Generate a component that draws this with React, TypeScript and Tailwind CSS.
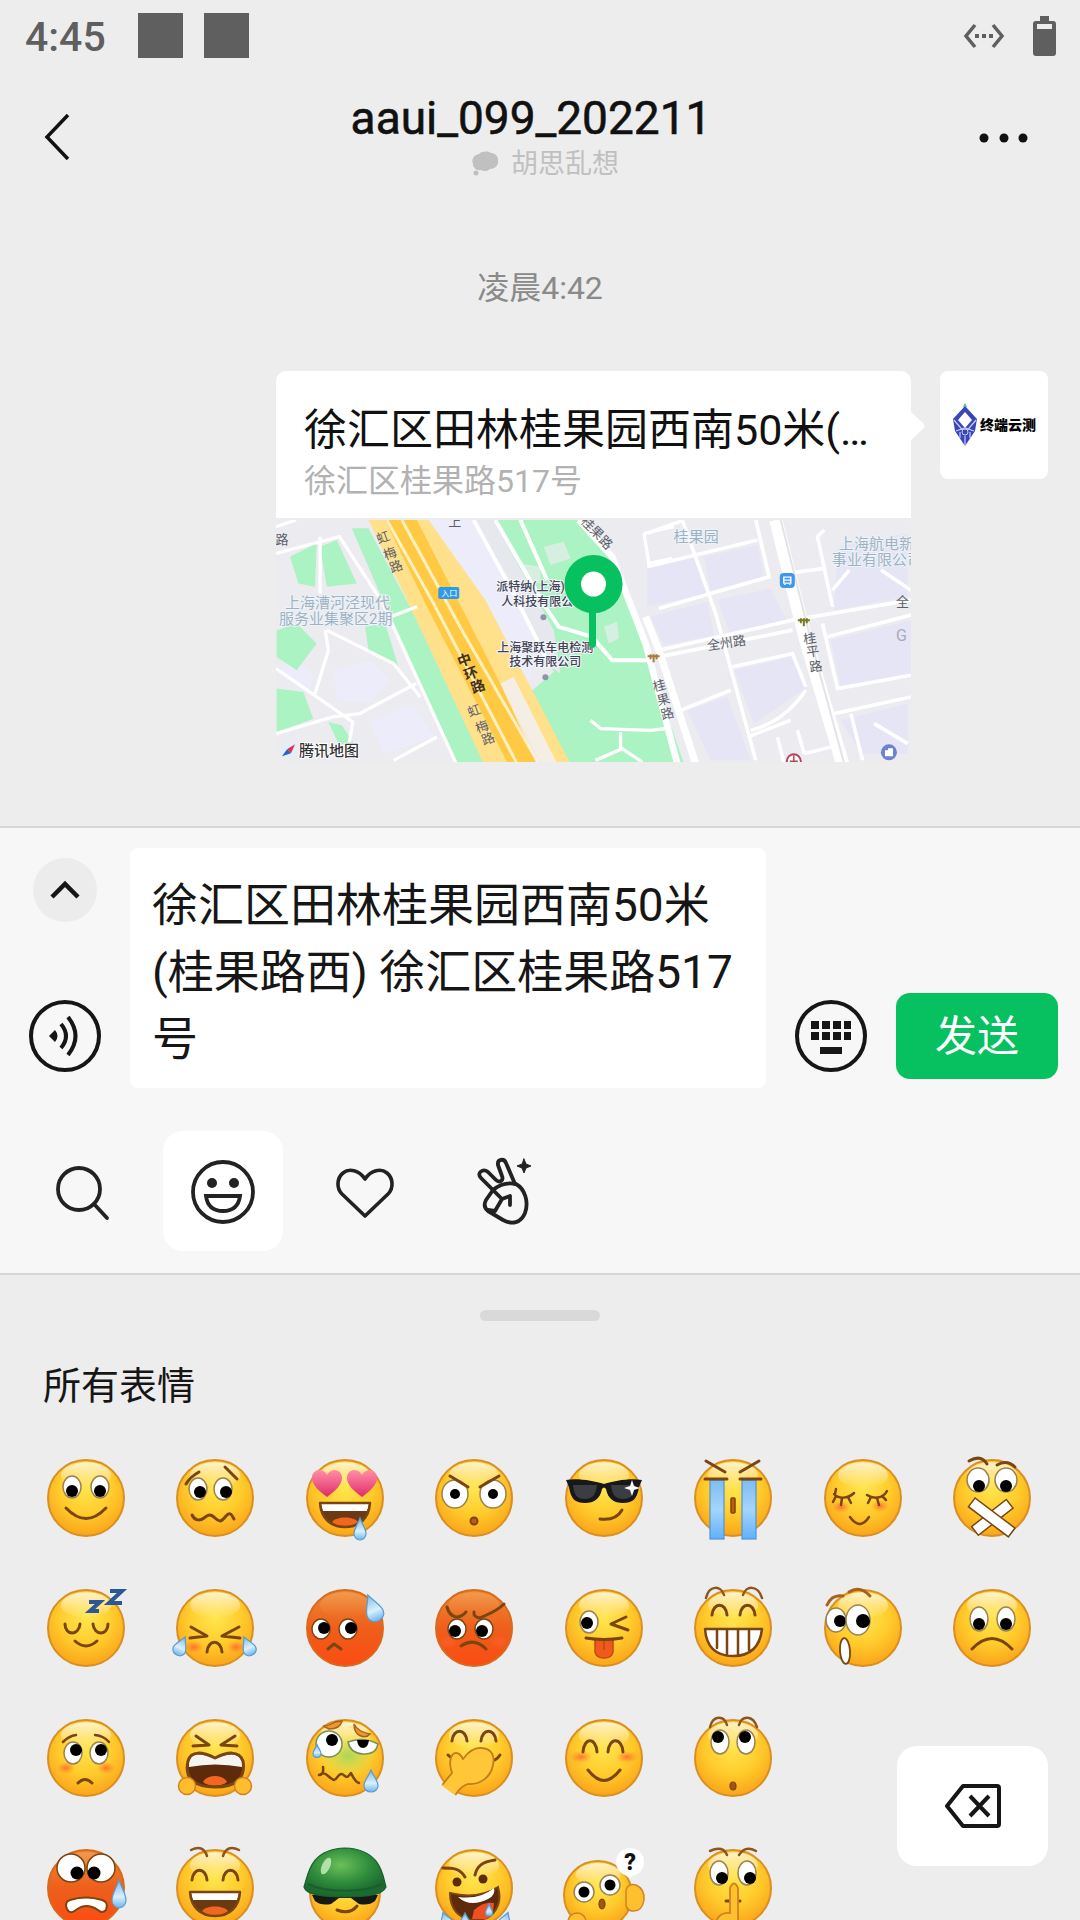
import React, { useState } from "react";
import type { ReactNode } from "react";

const FONT = "font-['Roboto','Noto_Sans_CJK_SC',sans-serif]";

/* ---------- status bar and header icons ---------- */

function StatusBar() {
  return (
    <div className="flex h-[71px] items-center justify-between pr-6 pl-[25px] text-[#5f5f5f]">
      <div className="flex items-center">
        <span className="mr-8 pt-1 text-[41px] leading-none font-medium">4:45</span>
        <span className="mr-[21px] size-[45px] bg-[#5f5f5f]" />
        <span className="size-[45px] bg-[#5f5f5f]" />
      </div>
      <div className="flex items-center gap-7">
        <svg width="42" height="26" viewBox="0 0 42 26" fill="none" stroke="currentColor" strokeWidth="3.5">
          <path d="M12 2 3 13l9 11M30 2l9 11-9 11" />
          <path d="M12 13h4M19 13h4M26 13h4" strokeWidth="4" />
        </svg>
        <svg width="23" height="40" viewBox="0 0 23 40" fill="currentColor">
          <path fillRule="evenodd" d="M7 0h9v5h4a3 3 0 0 1 3 3v29a3 3 0 0 1-3 3H3a3 3 0 0 1-3-3V8a3 3 0 0 1 3-3h4zM4 8v5h15V8z" />
        </svg>
      </div>
    </div>
  );
}

function Header() {
  return (
    <header className="flex h-[132px] items-center justify-between pr-[46px] pl-[36px]">
      <button aria-label="返回" className="flex h-20 w-14 items-center text-[#111]">
        <svg width="40" height="50" viewBox="0 0 40 50" fill="none" stroke="currentColor" strokeWidth="3.5">
          <path d="M32 3 11 25l21 22" />
        </svg>
      </button>
      <div className="flex flex-col items-center">
        <h1 className="text-[46px] leading-[54px] font-normal text-[#111] [-webkit-text-stroke:0.6px_#111]">aaui_099_202211</h1>
        <p className="flex items-center gap-3 pl-7 text-[27px] leading-[38px] text-[#c0c0c0]">
          <svg width="28" height="26" viewBox="0 0 28 26" fill="currentColor">
            <path d="M8 3c3-3 9-3 12-1 4 0 7 3 7 7 1 5-3 9-8 9-2 2-6 3-9 1-4 1-8-2-8-6-2-5 1-9 6-10z" />
            <circle cx="5" cy="22" r="2.5" />
          </svg>
          胡思乱想
        </p>
      </div>
      <button aria-label="更多" className="flex h-20 w-16 items-center justify-end pt-0.5 text-[#111]">
        <svg width="56" height="14" viewBox="0 0 56 14" fill="currentColor">
          <circle cx="6" cy="7" r="4.5" />
          <circle cx="26" cy="7" r="4.5" />
          <circle cx="45" cy="7" r="4.5" />
        </svg>
      </button>
    </header>
  );
}

/* ---------- map ---------- */

function MapWest() {
  return (
    <g transform="translate(-6 -160) scale(0.33333)" fill="none">
      <g fill="#ebebf0">
        <path d="M18 480h280l260 730H18z" />
      </g>
      <g fill="#ececfa">
        <path d="M190 930l110-30 60 60-60 70-100-10zM300 1080l130-50 60 100-150 50zM60 880l70 60-10 60-90-60z" />
        <path d="M440 480h260l130 330-60 160-90-40z" />
      </g>
      <g fill="#abf3c3">
        <path d="M245 505h50l370 700H555L385 830z" />
        <path d="M60 590l80-40-5 130-50-10zM150 560l50-20 60 130-90 10zM20 810l60-20 60 60-60 80-60-40zM20 985l80 10 30 80-110 40zM285 800l60-10 40 130-90-50z" />
        <path d="M175 1085l40 10 40 60-50-5z" />
        <path d="M645 480H920l105 110 100 260 95 360H870l-90-215 70-60-120-300z" />
      </g>
      <g fill="#e6e8ee">
        <path d="M610 480h60l180 330 20 130-60-40-60-190z" />
      </g>
      <g fill="#d6efe0">
        <path d="M820 560l60-15 20 50-60 20zM1000 800l40-15 5 50-30 15zM750 610l60 10v50l-50-10z" />
      </g>
      <path d="M295 480h180l170 240 255 490H640L420 740z" fill="#ffe08b" />
      <path d="M345 480h95l370 725H710L470 740z" fill="#ffc944" />
      <path d="M350 480l140 250 250 480M395 480l180 330 230 400" stroke="#fff0c0" strokeWidth="9" />
      <path d="M690 970l40-20 130 260h-60z" fill="#f3f1fb" opacity=".8" />
      <g stroke="#fff" strokeWidth="10">
        <path d="M18 580l190-50 130 200 220 480M150 530v170M18 500l60-20M170 810l200 100 80 100M165 810l10 60-40 130M18 925l230 160-10 60M18 1120l170-50 80-10 170-90M370 1200l130-70M360 770l80-30" />
        <path d="M610 480l130 240 100 200M675 480l150 260 40 60 100 30 60 70h110M750 480l80 180" strokeWidth="12" />
        <path d="M925 480l100 110 100 260 95 360" strokeWidth="20" />
        <path d="M960 1080l30 25 150 5 50-6M975 1200l80-35 60 40M1050 1165v-50M1120 520l15 90 70-15M1120 520l90-20" />
      </g>
    </g>
  );
}

function MapEast() {
  return (
    <g transform="translate(384 -160) scale(0.33333)" fill="none">
      <path d="M50 480h700v730H80L-45 860V560z" fill="#ebebf0" />
      <g fill="#e5e5f6">
        <path d="M-40 620l140-30 40 110-180 40zM130 590l160-35 20 95-160 40zM170 720l160-35 50 100-170 40zM-30 770l170-45 20 100-150 30z" />
        <path d="M220 930l170-40 50 90-160 110zM80 1050l120-40 70 190H150zM510 840l240-60v160l-210 40zM530 560l210-40v190l-220 40zM540 1080l200-50v150H600z" />
      </g>
      <path d="M-40 890l110 320H-40z" fill="#abf3c3" />
      <path d="M-45 770L-5 870l110 340" stroke="#fff" strokeWidth="22" />
      <g stroke="#fff" strokeWidth="11">
        <path d="M65 480l100 280 120 440M285 480l40 170-330 95M-40 520l110-40M-40 620l330-80M380 640l110-15M490 510l-20 20 45 210M515 690l50-60M660 630l90 60" />
        <path d="M-5 870l400-90 355-60M-5 890l400-80M500 830l250-65M485 790l45 195 220-40M520 1060l230-50M270 1110q100-25 165-120M260 1130l130-50M215 920l180-40 40 100M60 1050l150-60M350 1130l20 80M410 1110l20 70M430 1180l80-20M570 1060l35 140M640 1090l100 60" />
      </g>
      <path d="M345 480l90 360 110 370" stroke="#fff" strokeWidth="40" />
      <path d="M360 480l90 360 100 370" stroke="#e3e3e8" strokeWidth="6" />
    </g>
  );
}

const MAP_INK = "#5c5f69";

function MapPreview() {
  return (
    <svg className="block w-full" viewBox="0 0 634 242" fontFamily="'Roboto','Noto Sans CJK SC',sans-serif" fontSize="12" role="img" aria-label="地图">
      <rect width="634" height="242" fill="#ebebf0" />
      <MapEast />
      <MapWest />
      <g fill={MAP_INK} fontSize="13">
        <g textAnchor="middle">
          <text x="107" y="22" transform="rotate(-20 107 18)">虹</text>
          <text x="114" y="38" transform="rotate(-20 114 34)">梅</text>
          <text x="120" y="51" transform="rotate(-20 120 47)">路</text>
          <text x="198" y="195" transform="rotate(-20 198 191)">虹</text>
          <text x="206" y="211" transform="rotate(-20 206 207)">梅</text>
          <text x="212" y="223" transform="rotate(-20 212 219)">路</text>
          <text x="383" y="170" transform="rotate(-15 383 166)">桂</text>
          <text x="387" y="184" transform="rotate(-15 387 180)">果</text>
          <text x="391" y="198" transform="rotate(-15 391 194)">路</text>
          <text x="533" y="123" transform="rotate(-8 533 118)">桂</text>
          <text x="536" y="136" transform="rotate(-8 536 131)">平</text>
          <text x="539" y="151" transform="rotate(-8 539 146)">路</text>
          <text x="311" y="8" transform="rotate(45 311 4)">桂</text>
          <text x="320" y="17" transform="rotate(45 320 13)">果</text>
          <text x="329" y="27" transform="rotate(45 329 23)">路</text>
          <text x="6" y="24">路</text>
        </g>
        <text x="431" y="130" transform="rotate(-8 431 130)">全州路</text>
        <text x="619" y="86">全</text>
        <text x="172" y="6">上</text>
      </g>
      <g fill="#3d3020" fontSize="14" fontWeight="700" textAnchor="middle">
        <text x="188" y="145" transform="rotate(-20 188 140)">中</text>
        <text x="195" y="158" transform="rotate(-20 195 154)">环</text>
        <text x="202" y="171" transform="rotate(-20 202 167)">路</text>
      </g>
      <g fill="#9fb2c4" stroke="#eef3f8" strokeWidth="2" paintOrder="stroke" fontSize="15">
        <text x="9" y="88">上海漕河泾现代</text>
        <text x="3" y="104">服务业集聚区2期</text>
        <text x="397" y="22">桂果园</text>
        <text x="562" y="29">上海航电新</text>
        <text x="555" y="45">事业有限公司</text>
      </g>
      <text x="619" y="121" fontSize="16" fill="#a9a9b8">G</text>
      <g fill="#3f4354" stroke="#f4f5fb" strokeWidth="2" paintOrder="stroke" fontWeight="500">
        <text x="220" y="71">派特纳(上海)</text>
        <text x="225" y="86">人科技有限公</text>
        <text x="221" y="132">上海聚跃车电检测</text>
        <text x="233" y="146">技术有限公司</text>
      </g>
      <g fill="#8d95a8">
        <circle cx="267" cy="97" r="3" />
        <circle cx="269" cy="157" r="3" />
      </g>
      <g>
        <rect x="162" y="67" width="21" height="12" rx="2" fill="#2f9be8" />
        <text x="165" y="76" fontSize="8" fill="#fff">入口</text>
      </g>
      <g>
        <rect x="503" y="53" width="15" height="15" rx="4" fill="#3f97ea" />
        <path d="M507 57h7v6h-7zM508 64v1M513 64v1M507 60h7" fill="none" stroke="#fff" strokeWidth="1.4" />
      </g>
      <path d="M521 100h12M524 98v5M530 98v5M527 98v8" stroke="#7a7a20" strokeWidth="2" fill="none" />
      <path d="M371 136h12M374 134v5M380 134v5M377 134v8" stroke="#a97a3c" strokeWidth="2" fill="none" />
      <g>
        <circle cx="517" cy="241" r="7" fill="#fff" stroke="#b6455c" strokeWidth="2" />
        <path d="M513 241h8M517 235v7" stroke="#b6455c" strokeWidth="1.5" />
      </g>
      <circle cx="612" cy="232" r="8" fill="#6b83c9" />
      <path d="M608 236v-6h3v-2h5v8z" fill="#fff" />
      <path d="M316 86v38" stroke="#07c160" strokeWidth="7" strokeLinecap="round" />
      <circle cx="317" cy="64" r="29" fill="#07c160" />
      <circle cx="317" cy="64" r="12.5" fill="#fff" />
      <circle cx="13" cy="230" r="8" fill="#e4eefb" />
      <path d="M19 224l-4 9-4-4z" fill="#e0304a" />
      <path d="M6 236l5-7 4 4z" fill="#2c5fd0" />
      <text x="23" y="236" fontSize="15" fill="#333" stroke="#fff" strokeWidth="2" paintOrder="stroke" fontWeight="500">腾讯地图</text>
    </svg>
  );
}

/* ---------- conversation ---------- */

function Conversation() {
  return (
    <main className="flex flex-col pt-[65px] pb-16">
      <time className="self-center text-[32px] leading-10 text-[#8a8a8a]">凌晨4:42</time>
      <div className="mt-[63px] flex items-start justify-end gap-[29px] pr-8 pl-[276px]">
        <article className="relative min-w-0 flex-1">
          <svg className="absolute top-[40px] -right-[14px]" width="15" height="30" viewBox="0 0 15 30" fill="#fff">
            <path d="M0 0l13 12q3 3 0 6L0 30z" />
          </svg>
          <div className="overflow-hidden rounded-[10px] bg-white">
            <div className="border-b-2 border-[#ececec] px-7 pt-[30px] pb-[15px]">
              <h2 className="truncate text-[43px] leading-[58px] font-normal text-[#111]">徐汇区田林桂果园西南50米(…</h2>
              <p className="text-[32px] leading-[44px] text-[#b2b2b2]">徐汇区桂果路517号</p>
            </div>
            <MapPreview />
          </div>
        </article>
        <div className="flex size-[108px] items-center justify-center rounded-lg bg-white">
          <svg width="26" height="44" viewBox="0 0 26 44">
            <path d="M13 3l12 13-2 12-10 15L3 28 1 16z" fill="#3c45b8" />
            <path d="M13 9l7 8-7 8-7-8z" fill="#fff" />
            <path d="M2 17l11 13 11-13M4 28l9-3 9 3M13 33v10M8 29v6M18 29v6" fill="none" stroke="#c5cdf6" strokeWidth="1.2" />
            <circle cx="13" cy="29" r="3" fill="#3c45b8" stroke="#c5cdf6" />
            <path d="M11 4l2-4 2 4z" fill="#52b6a0" />
          </svg>
          <span className="ml-0.5 text-[14px] leading-6 font-black text-black">终端云测</span>
        </div>
      </div>
    </main>
  );
}

/* ---------- composer ---------- */

const ICON_BUTTON = "flex size-[72px] items-center justify-center text-[#161616]";

function VoiceIcon() {
  return (
    <svg width="72" height="72" viewBox="0 0 72 72" fill="none" stroke="currentColor" strokeWidth="4">
      <circle cx="36" cy="36" r="34" />
      <path d="M20 36l6-6q5 6 0 12z" fill="currentColor" stroke="none" />
      <path d="M32 24q10 12 0 24M39 17q15 19 0 38" />
    </svg>
  );
}

function KeyboardIcon() {
  return (
    <svg width="72" height="72" viewBox="0 0 72 72">
      <circle cx="36" cy="36" r="34" fill="none" stroke="currentColor" strokeWidth="4" />
      <path d="M16 21h8v8h-8zM27 21h8v8h-8zM38 21h8v8h-8zM49 21h7v8h-7zM16 32h8v8h-8zM27 32h8v8h-8zM38 32h8v8h-8zM49 32h7v8h-7zM25 47h22v7H25z" fill="currentColor" />
    </svg>
  );
}

function SearchIcon() {
  return (
    <svg width="60" height="60" viewBox="0 0 60 60" fill="none" stroke="currentColor" strokeWidth="3.8" strokeLinecap="round">
      <circle cx="27" cy="28" r="21" />
      <path d="M42 43l13 14" />
    </svg>
  );
}

function SmileIcon() {
  return (
    <svg width="66" height="66" viewBox="0 0 66 66" fill="none" stroke="currentColor" strokeWidth="3.8">
      <circle cx="33" cy="34" r="30" />
      <circle cx="22" cy="25" r="5" fill="currentColor" stroke="none" />
      <circle cx="44" cy="25" r="5" fill="currentColor" stroke="none" />
      <path d="M16 38h34q-2 15-17 15T16 38z" />
    </svg>
  );
}

function HeartIcon() {
  return (
    <svg width="62" height="56" viewBox="0 0 62 56" fill="none" stroke="currentColor" strokeWidth="3.6" strokeLinejoin="round">
      <path d="M32 16C26 7 16 5 10 10S3 25 9 31l23 22 23-22c6-6 5-16-1-21S38 7 32 16z" />
    </svg>
  );
}

function VictoryIcon() {
  return (
    <svg width="56" height="68" viewBox="18 17 56 68" fill="none" stroke="currentColor" strokeWidth="3.8" strokeLinecap="round" strokeLinejoin="round">
      <path d="M34 50L22 38c-5-5 2-10 7-6l8 8c3 3 8 1 6-4l-4-11c-1-6 6-7 8-2l9 21" />
      <path d="M34 50c6-5 14-8 23-6 9 5 13 18 9 29-4 10-13 12-22 7L29 71c-4-3-4-7-2-11z" />
      <path d="M34 50l9 9M29 70l7 1 7-12 8-3v9" />
      <path d="M65 19l2 5 5 2-5 2-2 5-2-5-5-2 5-2z" fill="currentColor" strokeWidth="1" />
    </svg>
  );
}

const TABS = [
  { label: "搜索", icon: <SearchIcon /> },
  { label: "表情", icon: <SmileIcon /> },
  { label: "收藏", icon: <HeartIcon /> },
  { label: "自拍", icon: <VictoryIcon /> },
];

function Composer() {
  const [text, setText] = useState("徐汇区田林桂果园西南50米(桂果路西) 徐汇区桂果路517号");
  const [tab, setTab] = useState(1);
  return (
    <section className="border-y-2 border-[#d6d6d6] bg-[#f7f7f7] pt-5 pb-[22px]">
      <div className="flex items-stretch gap-[29px] pr-[22px] pl-[29px]">
        <div className="flex flex-col items-center justify-between pt-[10px] pb-4">
          <button aria-label="展开" className="flex size-16 items-center justify-center rounded-full bg-[#ececec] text-[#161616]">
            <svg width="30" height="20" viewBox="0 0 30 20" fill="none" stroke="currentColor" strokeWidth="4.5">
              <path d="M2 17L15 4l13 13" />
            </svg>
          </button>
          <button aria-label="语音" className={ICON_BUTTON}><VoiceIcon /></button>
        </div>
        <textarea
          aria-label="消息"
          rows={3}
          value={text}
          onChange={(e) => setText(e.target.value)}
          className="block min-w-0 flex-1 resize-none overflow-hidden rounded-lg bg-white px-[22px] pt-6 pb-[15px] text-[46px] leading-[67px] text-[#161616] outline-none"
        />
        <div className="flex items-end pb-4">
          <button aria-label="键盘" className={ICON_BUTTON}><KeyboardIcon /></button>
        </div>
        <div className="flex items-end pb-[9px]">
          <button className="h-[86px] w-[162px] rounded-[14px] bg-[#07c160] pt-0.5 text-[42px] leading-none text-white">发送</button>
        </div>
      </div>
      <nav className="mt-[43px] flex gap-[21px] pl-[22px]">
        {TABS.map((t, i) => (
          <button
            key={t.label}
            aria-label={t.label}
            onClick={() => setTab(i)}
            className={`flex size-[120px] items-center justify-center rounded-[20px] text-[#222] ${i === tab ? "bg-white" : ""}`}
          >
            {t.icon}
          </button>
        ))}
      </nav>
    </section>
  );
}

/* ---------- emoji drawings, centred on 0,0 with a face radius of 39 ---------- */

const INK = "#7a4510";

function Face({ red, cx = 0, cy = 0, r = 38 }: { red?: boolean; cx?: number; cy?: number; r?: number }) {
  return (
    <>
      <circle cx={cx} cy={cy} r={r} fill={red ? "url(#face-red)" : "url(#face-yellow)"} stroke={red ? "#d86a1c" : "#d98f22"} strokeWidth="2" />
      <ellipse cx={cx} cy={cy - r * 0.6} rx={r * 0.66} ry={r * 0.34} fill="url(#face-shine)" opacity={red ? 0.2 : 1} />
    </>
  );
}

function Eye({ x, y, rx = 9, ry = 11, px = 0, py = 0, pr = 6, line = "#9b8250" }: { x: number; y: number; rx?: number; ry?: number; px?: number; py?: number; pr?: number; line?: string }) {
  return (
    <>
      <ellipse cx={x} cy={y} rx={rx} ry={ry} fill="#fff" stroke={line} strokeWidth="1.5" />
      <circle cx={x + px} cy={y + py} r={pr} fill="#000" />
    </>
  );
}

function Line({ d, w = 3, c = INK }: { d: string; w?: number; c?: string }) {
  return <path d={d} fill="none" stroke={c} strokeWidth={w} strokeLinecap="round" strokeLinejoin="round" />;
}

function Blush({ x, y, rx = 9, ry = 6 }: { x: number; y: number; rx?: number; ry?: number }) {
  return <ellipse cx={x} cy={y} rx={rx} ry={ry} fill="url(#blush)" />;
}

function Drop({ x, y, h = 22, w = 13, tilt = 0 }: { x: number; y: number; h?: number; w?: number; tilt?: number }) {
  return (
    <g transform={`translate(${x} ${y}) rotate(${tilt})`}>
      <path
        d={`M0 ${-h / 2}C${w * 0.2} ${-h * 0.2} ${w / 2} 0 ${w / 2} ${h * 0.22}A${w / 2} ${h * 0.28} 0 0 1 ${-w / 2} ${h * 0.22}C${-w / 2} 0 ${-w * 0.2} ${-h * 0.2} 0 ${-h / 2}z`}
        fill="url(#water)"
        stroke="#5b9bd0"
        strokeWidth="1.2"
      />
    </g>
  );
}

function HeartEye({ x, y }: { x: number; y: number }) {
  return <path transform={`translate(${x} ${y})`} d="M0 14C-8 8-15 2-15-5c0-9 11-11 15-3 4-8 15-6 15 3 0 7-7 13-15 19z" fill="url(#pink)" />;
}

function Grin({ y = 4 }: { y?: number }) {
  return (
    <g transform={`translate(0 ${y})`}>
      <path d="M-25 0h50c-1 15-10 24-25 24S-24 15-25 0z" fill="#6b3a12" />
      <path d="M-13 19c4-6 22-6 26 0-7 6-19 6-26 0z" fill="#f2671f" />
      <path d="M-24 1h48l-2 7h-44z" fill="#fff" />
      <Line d="M-25 0h50c-1 15-10 24-25 24S-24 15-25 0z" w={2.5} />
    </g>
  );
}

const EMOJI: { name: string; art: ReactNode }[] = [
  {
    name: "微笑",
    art: (<><Face /><Eye x={-14} y={-11} py={4} /><Eye x={14} y={-11} py={4} /><Line d="M-20 10Q0 31 20 10" /></>),
  },
  {
    name: "撇嘴",
    art: (<><Face /><Line d="M-29-14Q-25-21-16-26M10-31L22-19" /><Eye x={-17} y={-9} px={2} py={3} /><Eye x={8} y={-9} px={3} py={3} /><Line d="M-23 17C-20 23-15 23-11 20S-5 15 0 20 7 23 11 18 17 17 19 21" /></>),
  },
  {
    name: "色",
    art: (<><Face /><HeartEye x={-18} y={-15} /><HeartEye x={17} y={-15} /><Grin y={5} /><Drop x={15} y={31} w={12} /></>),
  },
  {
    name: "发呆",
    art: (<><Face /><Eye x={-19} y={-4} rx={13} ry={14} pr={5} /><Eye x={19} y={-4} rx={13} ry={14} pr={5} /><Line d="M-24-22L-6-11M25-22L6-11" /><circle cx="0" cy="23" r="3.5" fill="#c65a10" stroke={INK} strokeWidth="2" /></>),
  },
  {
    name: "得意",
    art: (<><Face /><path d="M-38-18C-26-20-10-17 0-14 10-17 26-20 38-18L35-11C33 2 28 5 19 5 10 5 4 1 2-9Q0-12-2-9C-4 1-10 5-19 5-28 5-33 2-35-11z" fill="#17181a" /><path d="M-31-13h24c-1 9-4 14-12 14s-11-4-12-14zM7-13h24c-1 10-4 14-12 14S8-4 7-13z" fill="#4a4d54" opacity=".7" /><path d="M28-18l2 6 6 2-6 2-2 6-2-6-6-2 6-2z" fill="#fff" /><Line d="M-4 21Q12 23 18 12" /></>),
  },
  {
    name: "流泪",
    art: (<><Face /><rect x="-23" y="-18" width="14" height="59" fill="url(#stream)" stroke="#4f94d8" strokeWidth="1.2" /><rect x="9" y="-18" width="14" height="59" fill="url(#stream)" stroke="#4f94d8" strokeWidth="1.2" /><Line d="M-27-37L-8-26M26-37L7-26M-28-19h22M7-19h21" /><rect x="-2" y="0" width="4" height="15" rx="1" fill="#c65a10" stroke={INK} strokeWidth="1.5" /></>),
  },
  {
    name: "害羞",
    art: (<><Face /><Blush x={-22} y={9} /><Blush x={17} y={8} /><Line d="M-29-4C-25 1-15 1-9-5M4-3C10 1 20 1 24-7M-27-2l-3 6M-21 0l-1 7M-15-1l3 6M-28-4l1-5M8-1L5 5M14 0l2 7M19-2l4 4" w={2.5} /><Line d="M-13 19Q-3 33 6 19" w={2.5} /></>),
  },
  {
    name: "闭嘴",
    art: (<><Face /><Line d="M-23-37Q-11-44-5-34M5-33Q15-39 23-31" /><Eye x={-14} y={-18} rx={11} ry={12} px={1} py={6} /><Eye x={14} y={-18} rx={11} ry={12} py={6} /><g fill="#fff" stroke={INK} strokeWidth="1.5"><rect x="-22" y="-5" width="44" height="11" transform="translate(0 19) rotate(-38)" /><rect x="-25" y="-5" width="50" height="11" transform="translate(0 19) rotate(37)" /></g></>),
  },
  {
    name: "睡",
    art: (<><Face /><Line d="M-21-4C-21 8-7 8-6-4M7-4C8 8 22 8 22-4M-11 13Q0 23 11 13" /><path d="M3-26H14L4-17H13M24-37H36L23-25H36" fill="none" stroke="#2b5797" strokeWidth="4" /></>),
  },
  {
    name: "大哭",
    art: (<><Face /><Blush x={-21} y={19} /><Blush x={21} y={19} /><Line d="M-24-1L-8 8-25 10M24-1L7 8 25 10M-8 24C-7 11 6 11 7 24" /><Drop x={-34} y={18} tilt={25} h={20} /><Drop x={33} y={18} tilt={-25} h={20} /></>),
  },
  {
    name: "尴尬",
    art: (<><Face red /><Eye x={-24} y={1} ry={10} px={3} py={-1} line={INK} /><Eye x={3} y={1} ry={10} px={3} py={-1} line={INK} /><Line d="M-17 21L-11 16-4 21" /><Drop x={28} y={-20} h={28} w={17} tilt={-22} /></>),
  },
  {
    name: "发怒",
    art: (<><Face red /><Blush x={-26} y={14} /><Blush x={25} y={14} /><Eye x={-17} y={1} ry={10} px={-2} py={2} line={INK} /><Eye x={10} y={1} ry={10} px={-2} py={2} line={INK} /><Line d="M-27-21C-24-10-15-8-8-16M30-24C22-16 14-14 6-10Q-1-11 0-16M-13 18Q0 9 12 21" /></>),
  },
  {
    name: "调皮",
    art: (<><Face /><Eye x={-15} y={-6} px={-2} py={1} pr={6} /><path d="M-9 11H9V24Q8 30 0 30T-9 24z" fill="#ee5a1c" stroke="#c6480f" strokeWidth="1.5" /><path d="M0 13v9" stroke="#c6480f" strokeWidth="1.5" /><Line d="M22-11L7-4 24 2M-18 10Q0 13 18 10" /></>),
  },
  {
    name: "呲牙",
    art: (<><Face /><path d="M-28 1H29Q26 28 0 28T-28 1z" fill="#fff" /><Line d="M-28 1H29Q26 28 0 28T-28 1zM-16 2v18M-6 2v25M5 2v25M16 2v20" w={2.5} /><Line d="M-27-30C-24-43-12-43-9-33M10-33C13-43 25-43 29-30" w={2.5} c="#8f5518" /><Line d="M-21-13C-20-26-7-26-6-13M7-13C8-26 21-26 22-13" /></>),
  },
  {
    name: "惊讶",
    art: (<><Face /><Line d="M-36-23Q-31-34-20-32M-14-36Q-3-43 7-32" c="#a8601c" /><Eye x={-27} y={-8} rx={10} ry={12} px={4} py={1} /><Eye x={-5} y={-8} rx={12} ry={15} px={5} py={1} pr={7} /><ellipse cx="-18" cy="23" rx="5" ry="13" transform="rotate(-4 -18 23)" fill="#fff" stroke={INK} strokeWidth="1.8" /></>),
  },
  {
    name: "难过",
    art: (<><Face /><Eye x={-13} y={-9} ry={12} py={5} /><Eye x={14} y={-9} ry={12} py={5} /><Line d="M-20 21Q0 0 20 21" /></>),
  },
  {
    name: "囧",
    art: (<><Face /><Blush x={-20} y={10} /><Blush x={20} y={10} /><Line d="M-23-16Q-17-22-10-23M9-23Q18-22 23-16" w={2.5} /><Eye x={-13} y={-5} px={3} py={-3} /><Eye x={13} y={-5} px={2} py={-3} /><Line d="M-8 25Q-1 18 6 25" /></>),
  },
  {
    name: "抓狂",
    art: (<><Face /><path d="M-27 3C-24-8-12-6 0 0 12-6 24-8 28 3 31 21 20 29 0 29S-31 21-27 3z" fill="#5d2b0c" /><path d="M-12 24C-8 16 8 16 12 24 6 29-6 29-12 24z" fill="#f2671f" /><path d="M-26 4C-24-6-12-5 0 1 12-5 24-6 27 4V9Q0 4-26 9z" fill="#f4f4f0" /><Line d="M-27 3C-24-8-12-6 0 0 12-6 24-8 28 3 31 21 20 29 0 29S-31 21-27 3zM-19-22L-6-13-22-12M20-22L6-13 22-12" /><circle cx="-28" cy="28" r="8.5" fill="#ffbd2e" stroke="#cf8420" strokeWidth="1.5" /><circle cx="28" cy="28" r="8.5" fill="#ffbd2e" stroke="#cf8420" strokeWidth="1.5" /></>),
  },
  {
    name: "吐",
    art: (<><Face /><ellipse cx="3" cy="-2" rx="28" ry="22" fill="url(#sick)" /><path d="M-22-32q6 0 12-4l7-1q-2 8-13 8zM9-34q4 8 16 10-4 5-11 1-5-3-5-11z" fill="#f0982c" stroke="#a8621c" strokeWidth="1.5" /><Eye x={-16} y={-14} rx={13} ry={13} px={3} py={-4} pr={6} line="#77905a" /><path d="M3-16Q18-22 33-14 31-3 18-4 5-5 3-16z" fill="#fff" stroke="#77905a" strokeWidth="1.5" /><path d="M12-18h12q-1 8-6 8t-6-8z" /><Drop x={-28} y={-7} h={13} w={8} /><Line d="M-26 17Q-21 17-22 9M-26 17C-19 12-17 20-11 22-8 22-7 15-3 16 1 18 1 22 6 15 8 19 10 24 14 25" w={2.5} /><Drop x={26} y={23} w={14} /></>),
  },
  {
    name: "偷笑",
    art: (<><Face /><Line d="M-22-17C-21-30-8-30-7-17M7-17C8-30 21-30 22-17M-26-3Q-21 2-14 1M26-3Q22 3 16 3" /><path d="M-33 27L-22 15C-26 4-23-5-18-5-14-5-12-1-11 1-6-6 0-11 8-10 18-9 21-2 19 7 17 19 6 27-6 26-10 27-14 30-18 38z" fill="#ffc737" /><Line d="M-31 26L-22 15C-26 4-23-5-18-5-14-5-12-1-11 1-6-6 0-11 8-10 18-9 21-2 19 7 17 19 6 27-6 26-10 27-14 30-18 36" w={1.8} c="#c27c18" /></>),
  },
  {
    name: "愉快",
    art: (<><Face /><Blush x={-23} y={-1} rx={11} /><Blush x={23} y={-1} rx={11} /><Line d="M-21-6C-20-21-8-21-7-6M4-6C5-21 18-21 19-6M-16 12Q0 33 16 12" /></>),
  },
  {
    name: "白眼",
    art: (<><Face /><Line d="M-23-31C-20-43-9-43-6-33M6-33C9-43 20-43 24-31" w={2.5} c="#8f5518" /><Eye x={-13} y={-16} ry={12} px={-2} py={-5} /><Eye x={13} y={-16} ry={12} px={-1} py={-5} /><ellipse cx="0" cy="28" rx="3" ry="4" fill="#a5540f" stroke={INK} strokeWidth="1.2" /></>),
  },
  {
    name: "惊恐",
    art: (<><Face red /><Eye x={-15} y={-20} rx={14} ry={14} px={6} py={5} pr={6.5} line={INK} /><Eye x={15} y={-20} rx={14} ry={14} px={-7} py={5} pr={6.5} line={INK} /><path d="M-16 12Q0 7 16 12 23 14 20 22 16 26 12 22 0 14-10 22-16 27-19 21-22 14-16 12z" fill="#fff" stroke={INK} strokeWidth="2" /><Drop x={33} y={6} h={28} w={14} /></>),
  },
  {
    name: "憨笑",
    art: (<><Face /><Line d="M-24-38Q-12-44-8-32M24-38Q12-44 8-32" w={2.5} c="#8f5518" /><Line d="M-23-8C-22-21-9-21-8-8M8-8C9-21 22-21 23-8" /><Grin y={4} /></>),
  },
  {
    name: "悠闲",
    art: (<><Face cy={5} r={35} /><path d="M-33 7H33L30 13Q24 18 14 16L6 10H-6L-14 16Q-24 18-30 13z" fill="#171a14" /><path d="M-41-1C-37-12-36-39 0-40 36-39 38-12 41-1 38 5 30 9 0 9S-39 5-41-1z" fill="url(#helmet)" stroke="#17602c" strokeWidth="1.2" /><path d="M-37-4C-20 5 20 5 37-4" fill="none" stroke="#17602c" strokeWidth="2" /><ellipse cx="-19" cy="-22" rx="4" ry="9" transform="rotate(25 -19 -22)" fill="#c9f0c0" opacity=".8" /><Line d="M-8 22Q5 27 12 18" /></>),
  },
  {
    name: "咒骂",
    art: (<><Face /><Line d="M-31-20C-22-20-14-20-9-11M21-28C8-26 3-22 1-13" /><circle cx="-17" cy="-6" r="4.5" fill="#5d2b0c" /><circle cx="9" cy="-9" r="4.5" fill="#5d2b0c" /><path d="M-24 5Q3 12 24-1C29 16 20 32 2 32S-24 20-24 5z" fill="#5d2b0c" stroke={INK} strokeWidth="2" /><path d="M-16 9Q6 12 20 0 22 7 14 11-4 20-16 9z" fill="#fff" /><path d="M0 22q10-9 20-7 0 12-8 16H-2z" fill="#f04e23" /><Drop x={15} y={22} h={12} w={7} /><Drop x={-28} y={33} h={18} w={13} tilt={-20} /><Drop x={-9} y={33} h={16} w={11} /><Drop x={31} y={33} h={18} w={13} tilt={20} /></>),
  },
  {
    name: "疑问",
    art: (<><Face cx={-6} cy={7} r={34} /><path d="M22 2Q24-5 32-3 41 1 40 12 38 24 28 23 21 22 22 13z" fill="#ffc02f" stroke="#cf8420" strokeWidth="1.5" /><Eye x={-20} y={4} rx={10} ry={10} pr={5.5} /><Eye x={6} y={-3} rx={10} ry={10} pr={5.5} /><ellipse cx="-2" cy="16" rx="3" ry="5" fill="#a5540f" stroke={INK} strokeWidth="1.2" /><circle cx="-27" cy="34" r="9" fill="#ffc02f" stroke="#cf8420" strokeWidth="1.5" /><path d="M20-14l6 5 4-5z" fill="#fff" /><circle cx="26" cy="-26" r="14" fill="#fff" /><text x="26" y="-18" textAnchor="middle" fontSize="23" fontWeight="900" fill="#111">?</text></>),
  },
  {
    name: "嘘",
    art: (<><Face /><Line d="M-23-37Q-10-43-6-33M6-33Q12-43 23-37" w={2.5} c="#8f5518" /><Eye x={-14} y={-15} ry={12} px={3} py={5} /><Eye x={14} y={-15} ry={12} px={3} py={5} /><Line d="M-7 13h14" /><path d="M-3 25V0Q1-9 5 0V40H-18Q-17 24-3 25z" fill="#ffc02f" stroke="#cf8420" strokeWidth="1.8" /></>),
  },
];

function EmojiDefs() {
  return (
    <svg className="absolute size-0" aria-hidden="true">
      <defs>
        <radialGradient id="face-yellow" cx=".5" cy=".36" r=".7">
          <stop offset="0" stopColor="#ffe650" />
          <stop offset=".5" stopColor="#ffcc2c" />
          <stop offset="1" stopColor="#f99c16" />
        </radialGradient>
        <linearGradient id="face-red" x2="0" y2="1">
          <stop offset="0" stopColor="#ee8a30" />
          <stop offset=".5" stopColor="#ee5f1c" />
          <stop offset="1" stopColor="#fb4c12" />
        </linearGradient>
        <linearGradient id="face-shine" x2="0" y2="1">
          <stop offset="0" stopColor="#fff" stopOpacity=".75" />
          <stop offset="1" stopColor="#fff" stopOpacity="0" />
        </linearGradient>
        <radialGradient id="blush">
          <stop offset="0" stopColor="#ff5a32" stopOpacity=".75" />
          <stop offset="1" stopColor="#ff6a32" stopOpacity="0" />
        </radialGradient>
        <radialGradient id="sick">
          <stop offset="0" stopColor="#a9d65a" />
          <stop offset="1" stopColor="#d6d84a" stopOpacity="0" />
        </radialGradient>
        <linearGradient id="water" x2="0" y2="1">
          <stop offset="0" stopColor="#7fb9e6" />
          <stop offset=".6" stopColor="#d8f0ff" />
          <stop offset="1" stopColor="#6cb4ea" />
        </linearGradient>
        <linearGradient id="stream" x2="0" y2="1">
          <stop offset="0" stopColor="#7dbcf2" />
          <stop offset=".5" stopColor="#a5d5fb" />
          <stop offset="1" stopColor="#62b0fa" />
        </linearGradient>
        <linearGradient id="pink" x2="0" y2="1">
          <stop offset="0" stopColor="#ff8fa6" />
          <stop offset="1" stopColor="#e02c6b" />
        </linearGradient>
        <radialGradient id="helmet" cx=".45" cy=".35" r=".6">
          <stop offset="0" stopColor="#6cc05a" />
          <stop offset=".6" stopColor="#2f8c3c" />
          <stop offset="1" stopColor="#1c6a30" />
        </radialGradient>
      </defs>
    </svg>
  );
}

function EmojiPanel() {
  return (
    <section className="relative flex min-h-0 flex-1 flex-col overflow-hidden pt-[35px]">
      <EmojiDefs />
      <div className="h-[11px] w-[120px] shrink-0 self-center rounded-full bg-[#d9d9d9]" />
      <h2 className="mt-10 pl-[43px] text-[38px] leading-[50px] font-normal text-[#161616]">所有表情</h2>
      <div className="mt-[22px] grid grid-cols-8 pr-[23px] pl-[21px]">
        {EMOJI.map((e, i) => (
          <button
            key={e.name}
            aria-label={e.name}
            className={`flex h-[130px] items-center justify-center ${i > 15 && (i - 16) % 6 === 0 ? "col-start-1" : ""}`}
          >
            <svg width="100" height="100" viewBox="-50 -50 100 100">{e.art}</svg>
          </button>
        ))}
      </div>
      <button aria-label="删除" className="absolute right-8 bottom-[54px] flex h-[120px] w-[151px] items-center justify-center rounded-[20px] bg-white text-[#161616]">
        <svg width="56" height="46" viewBox="0 0 56 46" fill="none" stroke="currentColor" strokeWidth="4" strokeLinejoin="round">
          <path d="M18 3h34q2 0 2 2v36q0 2-2 2H18L2 23z" />
          <path d="M25 13l19 20M44 13L25 33" />
        </svg>
      </button>
    </section>
  );
}

export default function App() {
  return (
    <div className={`flex h-screen flex-col overflow-hidden bg-[#ededed] ${FONT}`}>
      <StatusBar />
      <Header />
      <Conversation />
      <Composer />
      <EmojiPanel />
    </div>
  );
}
